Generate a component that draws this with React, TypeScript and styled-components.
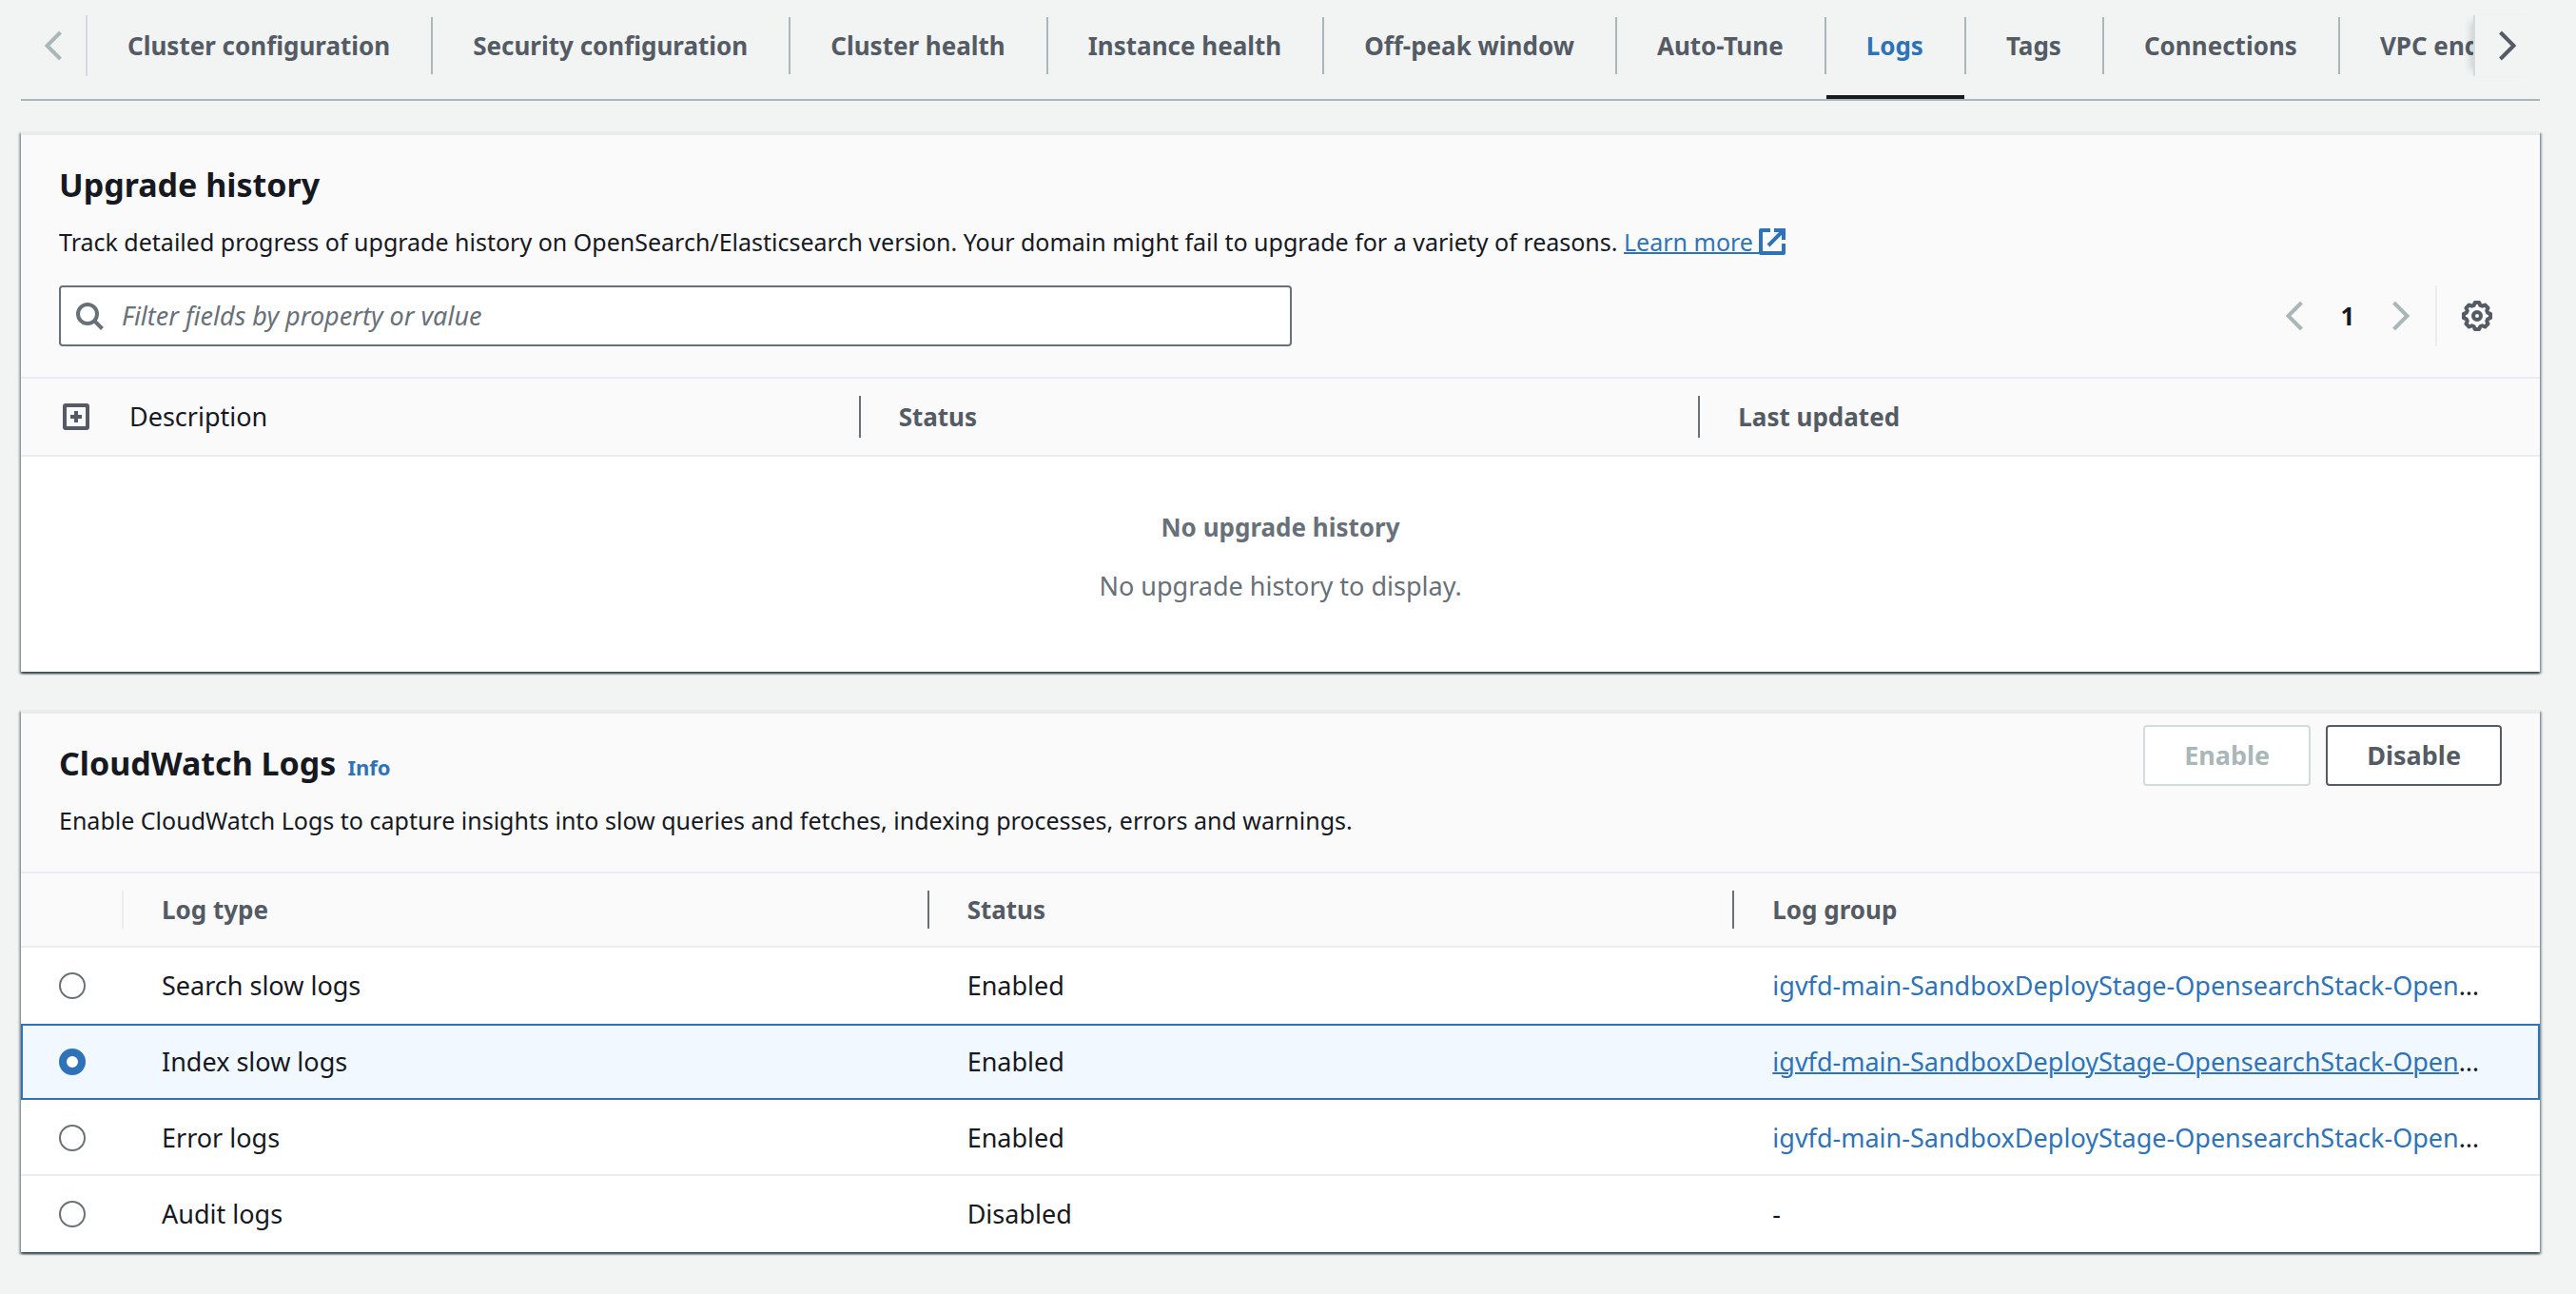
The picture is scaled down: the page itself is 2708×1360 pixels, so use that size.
import React, { useState } from "react";
import styled, { createGlobalStyle, css } from "styled-components";

const color = {
  page: "#f2f4f3",
  panel: "#fafafa",
  ink: "#16191f",
  muted: "#545b64",
  hint: "#687078",
  line: "#eaeded",
  softLine: "#d5dbdb",
  tabLine: "#aab7b8",
  blue: "#2e73b8",
  selected: "#f1f8ff",
};

const GlobalStyle = createGlobalStyle`
  *, *::before, *::after { box-sizing: border-box; }
  body {
    margin: 0;
    background: ${color.page};
    color: ${color.ink};
    font-family: "Noto Sans", "Open Sans", sans-serif;
    font-size: 27px;
    line-height: 44px;
  }
  button, input { font: inherit; color: inherit; }
  button { cursor: pointer; }
  h2, p, ul { margin: 0; padding: 0; }
`;

const Page = styled.main`
  display: flex;
  flex-direction: column;
  padding: 0 38px 40px 22px;
`;

/* ---------- tabs ---------- */

const TabBar = styled.nav`
  display: flex;
  align-items: flex-start;
  border-bottom: 2px solid ${color.tabLine};
  margin-bottom: 32px;
`;

const ScrollButton = styled.button<{ $side: "left" | "right" }>`
  flex: none;
  display: flex;
  align-items: center;
  justify-content: center;
  width: 70px;
  height: 64px;
  margin-top: 16px;
  padding: 0;
  border: 0 solid ${color.softLine};
  background: ${color.page};
  color: ${({ $side }) => ($side === "left" ? color.tabLine : color.muted)};
  ${({ $side }) =>
    $side === "left"
      ? css`
          border-right-width: 2px;
        `
      : css`
          position: relative;
          border-left-width: 2px;
          box-shadow: -8px 0 8px -6px rgba(0, 28, 36, 0.2);
        `}
`;

const TabList = styled.ul`
  flex: 1;
  min-width: 0;
  display: flex;
  overflow: hidden;
  list-style: none;
`;

const TabItem = styled.li`
  flex: none;
  display: flex;
  &:not(:last-child)::after {
    content: "";
    width: 2px;
    height: 60px;
    margin-top: 18px;
    background: ${color.tabLine};
  }
`;

const Tab = styled.button<{ $active: boolean }>`
  height: 104px;
  padding: 26px 43px 30px 42px;
  border: 0;
  border-bottom: 4px solid ${({ $active }) => ($active ? color.ink : "transparent")};
  background: none;
  color: ${({ $active }) => ($active ? color.blue : color.muted)};
  font-size: 26px;
  font-weight: 700;
  white-space: nowrap;
`;

/* ---------- panels ---------- */

const Panel = styled.section`
  border-top: 4px solid ${color.line};
  background: #fff;
  box-shadow:
    0 2px 2px 0 rgba(0, 28, 36, 0.6),
    2px 2px 2px 0 rgba(0, 28, 36, 0.3),
    -2px 2px 2px 0 rgba(0, 28, 36, 0.3);
  & + & {
    margin-top: 40px;
  }
`;

const PanelHeader = styled.header`
  padding: 12px 40px 32px;
  border-bottom: 2px solid ${color.line};
  background: ${color.panel};
`;

const HeaderRow = styled.div`
  display: flex;
  justify-content: space-between;
  align-items: flex-start;
`;

const Heading = styled.div`
  display: flex;
  flex-direction: column;
  gap: 16px;
  padding-top: 18px;
`;

const TitleLine = styled.div`
  display: flex;
  align-items: baseline;
  gap: 12px;
`;

const Title = styled.h2`
  font-size: 34px;
  font-weight: 700;
  line-height: 44px;
`;

const Description = styled.p`
  font-size: 25px;
`;

const Link = styled.a<{ $underlined?: boolean }>`
  color: ${color.blue};
  text-decoration: ${({ $underlined }) => ($underlined ? "underline" : "none")};
  text-decoration-thickness: 2px;
  svg {
    vertical-align: -4px;
  }
`;

const InfoLink = styled(Link)`
  font-size: 22px;
  font-weight: 700;
  line-height: 24px;
`;

const Actions = styled.div`
  display: flex;
  gap: 16px;
`;

const Button = styled.button`
  height: 64px;
  padding: 0 41px;
  border: 2px solid ${color.muted};
  border-radius: 4px;
  background: #fff;
  color: ${color.muted};
  font-weight: 700;
  &:disabled {
    border-color: ${color.softLine};
    color: ${color.tabLine};
  }
`;

/* ---------- filter and paging ---------- */

const Toolbar = styled.div`
  display: flex;
  justify-content: space-between;
  margin-top: 24px;
`;

const SearchBox = styled.label`
  flex: 0 1 1296px;
  display: flex;
  align-items: center;
  gap: 18px;
  height: 64px;
  padding: 0 14px;
  border: 2px solid ${color.hint};
  border-radius: 4px;
  background: #fff;
  color: ${color.hint};
`;

const SearchInput = styled.input`
  flex: 1;
  min-width: 0;
  padding: 0;
  border: 0;
  outline: 0;
  background: none;
  &::placeholder {
    color: ${color.hint};
    font-style: italic;
    opacity: 1;
  }
`;

const Paging = styled.div`
  display: flex;
  align-items: center;
`;

const IconButton = styled.button`
  display: flex;
  align-items: center;
  justify-content: center;
  width: 32px;
  height: 64px;
  padding: 0;
  border: 0;
  background: none;
  color: ${color.muted};
  &:disabled {
    color: ${color.tabLine};
  }
`;

const PageNumber = styled.button`
  width: 80px;
  padding: 0;
  border: 0;
  background: none;
  color: ${color.ink};
  font-size: 26px;
  font-weight: 700;
`;

const Preferences = styled.div`
  margin-left: 20px;
  padding: 0 10px 0 26px;
  border-left: 2px solid ${color.line};
`;

/* ---------- tables ---------- */

const Table = styled.table`
  width: 100%;
  table-layout: fixed;
  border-collapse: separate;
  border-spacing: 0;
`;

const HeadCell = styled.th<{ $tall?: boolean; $select?: boolean }>`
  width: ${({ $select }) => ($select ? "108px" : "auto")};
  height: ${({ $tall }) => ($tall ? "82px" : "78px")};
  padding: 0;
  border-bottom: 2px solid ${color.line};
  background: ${color.panel};
  color: ${color.muted};
  font-size: 26px;
  font-weight: 700;
  text-align: left;
  &:not(:last-child) > div {
    border-right: 2px solid ${({ $select }) => ($select ? color.line : color.hint)};
  }
`;

const HeadLabel = styled.div<{ $tall?: boolean }>`
  display: flex;
  align-items: center;
  gap: 42px;
  height: ${({ $tall }) => ($tall ? "44px" : "40px")};
  padding-left: 40px;
`;

const ExpandLabel = styled(HeadLabel)`
  padding-left: 44px;
  color: ${color.ink};
  font-size: 27px;
  font-weight: 400;
`;

const ExpandButton = styled(IconButton)`
  width: 28px;
  height: 28px;
`;

const EmptyCell = styled.td`
  padding: 52px 40px 68px;
  color: ${color.hint};
  text-align: center;
`;

const EmptyText = styled.p<{ $strong?: boolean }>`
  font-size: ${({ $strong }) => ($strong ? "26px" : "27px")};
  font-weight: ${({ $strong }) => ($strong ? 700 : 400)};
  & + & {
    margin-top: 18px;
  }
`;

const Row = styled.tr<{ $selected: boolean; $ruled: boolean }>`
  background: ${({ $selected }) => ($selected ? color.selected : "#fff")};
  ${({ $selected }) =>
    $selected &&
    css`
      outline: 2px solid ${color.blue};
      outline-offset: -2px;
    `}
  td {
    border-bottom: 2px solid ${({ $ruled }) => ($ruled ? color.line : "transparent")};
  }
`;

const Cell = styled.td`
  height: 80px;
  padding: 2px 40px 0;
  overflow: hidden;
  text-overflow: ellipsis;
  white-space: nowrap;
`;

const Radio = styled.input`
  appearance: none;
  display: block;
  width: 28px;
  height: 28px;
  margin: 0;
  border: 2px solid ${color.hint};
  border-radius: 50%;
  background: #fff;
  &:checked {
    border: 8px solid ${color.blue};
  }
`;

/* ---------- icons ---------- */

const Chevron = ({ flip = false }: { flip?: boolean }) => (
  <svg width="20" height="32" viewBox="0 0 20 32" fill="none" stroke="currentColor" strokeWidth="4" aria-hidden="true">
    <path d={flip ? "M2.5 2 16.5 16 2.5 30" : "M17.5 2 3.5 16 17.5 30"} />
  </svg>
);

const SearchIcon = () => (
  <svg width="32" height="32" viewBox="0 0 32 32" fill="none" stroke="currentColor" strokeWidth="4" aria-hidden="true">
    <circle cx="14" cy="14" r="10" />
    <path d="M21 21 29.5 29.5" />
  </svg>
);

const ExternalIcon = () => (
  <svg width="28" height="28" viewBox="0 0 28 28" fill="none" stroke="currentColor" strokeWidth="4" aria-hidden="true">
    <path d="M12 2H2V26H26V16" strokeLinejoin="round" />
    <path d="M16 2H26V12M25.5 2.5 10 18" />
  </svg>
);

const PlusBoxIcon = () => (
  <svg width="28" height="28" viewBox="0 0 28 28" fill="none" stroke="currentColor" strokeWidth="4" aria-hidden="true">
    <rect x="2" y="2" width="24" height="24" rx="1" />
    <path d="M14 8V20M8 14H20" />
  </svg>
);

const toothPoint = (radius: number, degrees: number) => {
  const angle = (degrees * Math.PI) / 180;
  return `${(16 + radius * Math.cos(angle)).toFixed(2)} ${(16 + radius * Math.sin(angle)).toFixed(2)}`;
};

const gearOutline = `M${Array.from({ length: 8 }, (_, i) => i * 45)
  .map((a) => [toothPoint(14.2, a - 9), toothPoint(14.2, a + 9), toothPoint(11.6, a + 17), toothPoint(11.6, a + 28)].join("L"))
  .join("L")}Z`;

const GearIcon = () => (
  <svg width="32" height="32" viewBox="0 0 32 32" fill="none" stroke="currentColor" strokeWidth="4" aria-hidden="true">
    <path d={gearOutline} strokeLinejoin="round" />
    <circle cx="16" cy="16" r="4" />
  </svg>
);

/* ---------- content ---------- */

const tabs = [
  "Cluster configuration",
  "Security configuration",
  "Cluster health",
  "Instance health",
  "Off-peak window",
  "Auto-Tune",
  "Logs",
  "Tags",
  "Connections",
  "VPC endpoints",
];

const logGroup = "igvfd-main-SandboxDeployStage-OpensearchStack-Open";

const logs = [
  { id: "search", name: "Search slow logs", status: "Enabled", group: logGroup },
  { id: "index", name: "Index slow logs", status: "Enabled", group: logGroup },
  { id: "error", name: "Error logs", status: "Enabled", group: logGroup },
  { id: "audit", name: "Audit logs", status: "Disabled", group: null },
];

export default function App() {
  const [activeTab, setActiveTab] = useState("Logs");
  const [selected, setSelected] = useState("index");
  const selectedIndex = logs.findIndex((log) => log.id === selected);

  return (
    <>
      <GlobalStyle />
      <Page>
        <TabBar>
          <ScrollButton $side="left" aria-label="Scroll tabs left">
            <Chevron />
          </ScrollButton>
          <TabList>
            {tabs.map((tab) => (
              <TabItem key={tab}>
                <Tab $active={tab === activeTab} onClick={() => setActiveTab(tab)}>
                  {tab}
                </Tab>
              </TabItem>
            ))}
          </TabList>
          <ScrollButton $side="right" aria-label="Scroll tabs right">
            <Chevron flip />
          </ScrollButton>
        </TabBar>

        <Panel>
          <PanelHeader>
            <Heading>
              <Title>Upgrade history</Title>
              <Description>
                Track detailed progress of upgrade history on OpenSearch/Elasticsearch version. Your domain might fail
                to upgrade for a variety of reasons.{" "}
                <Link href="#learn-more" $underlined>
                  Learn more <ExternalIcon />
                </Link>
              </Description>
            </Heading>
            <Toolbar>
              <SearchBox>
                <SearchIcon />
                <SearchInput
                  type="text"
                  aria-label="Filter upgrade history"
                  placeholder="Filter fields by property or value"
                />
              </SearchBox>
              <Paging>
                <IconButton disabled aria-label="Previous page">
                  <Chevron />
                </IconButton>
                <PageNumber>1</PageNumber>
                <IconButton disabled aria-label="Next page">
                  <Chevron flip />
                </IconButton>
                <Preferences>
                  <IconButton aria-label="Preferences">
                    <GearIcon />
                  </IconButton>
                </Preferences>
              </Paging>
            </Toolbar>
          </PanelHeader>
          <Table>
            <thead>
              <tr>
                <HeadCell $tall>
                  <ExpandLabel $tall>
                    <ExpandButton aria-label="Expand all">
                      <PlusBoxIcon />
                    </ExpandButton>
                    Description
                  </ExpandLabel>
                </HeadCell>
                <HeadCell $tall>
                  <HeadLabel $tall>Status</HeadLabel>
                </HeadCell>
                <HeadCell $tall>
                  <HeadLabel $tall>Last updated</HeadLabel>
                </HeadCell>
              </tr>
            </thead>
            <tbody>
              <tr>
                <EmptyCell colSpan={3}>
                  <EmptyText $strong>No upgrade history</EmptyText>
                  <EmptyText>No upgrade history to display.</EmptyText>
                </EmptyCell>
              </tr>
            </tbody>
          </Table>
        </Panel>

        <Panel>
          <PanelHeader>
            <HeaderRow>
              <Heading>
                <TitleLine>
                  <Title>CloudWatch Logs</Title>
                  <InfoLink href="#info">Info</InfoLink>
                </TitleLine>
                <Description>
                  Enable CloudWatch Logs to capture insights into slow queries and fetches, indexing processes, errors
                  and warnings.
                </Description>
              </Heading>
              <Actions>
                <Button disabled>Enable</Button>
                <Button>Disable</Button>
              </Actions>
            </HeaderRow>
          </PanelHeader>
          <Table>
            <thead>
              <tr>
                <HeadCell $select>
                  <HeadLabel />
                </HeadCell>
                <HeadCell>
                  <HeadLabel>Log type</HeadLabel>
                </HeadCell>
                <HeadCell>
                  <HeadLabel>Status</HeadLabel>
                </HeadCell>
                <HeadCell>
                  <HeadLabel>Log group</HeadLabel>
                </HeadCell>
              </tr>
            </thead>
            <tbody>
              {logs.map((log, i) => (
                <Row
                  key={log.id}
                  $selected={log.id === selected}
                  $ruled={i !== selectedIndex && i + 1 !== selectedIndex && i < logs.length - 1}
                >
                  <Cell>
                    <Radio
                      type="radio"
                      name="log-type"
                      aria-label={log.name}
                      checked={log.id === selected}
                      onChange={() => setSelected(log.id)}
                    />
                  </Cell>
                  <Cell>{log.name}</Cell>
                  <Cell>{log.status}</Cell>
                  <Cell>
                    {log.group ? (
                      <>
                        <Link href={`#${log.id}`} $underlined={log.id === selected}>
                          {log.group}
                        </Link>
                        …
                      </>
                    ) : (
                      "-"
                    )}
                  </Cell>
                </Row>
              ))}
            </tbody>
          </Table>
        </Panel>
      </Page>
    </>
  );
}
